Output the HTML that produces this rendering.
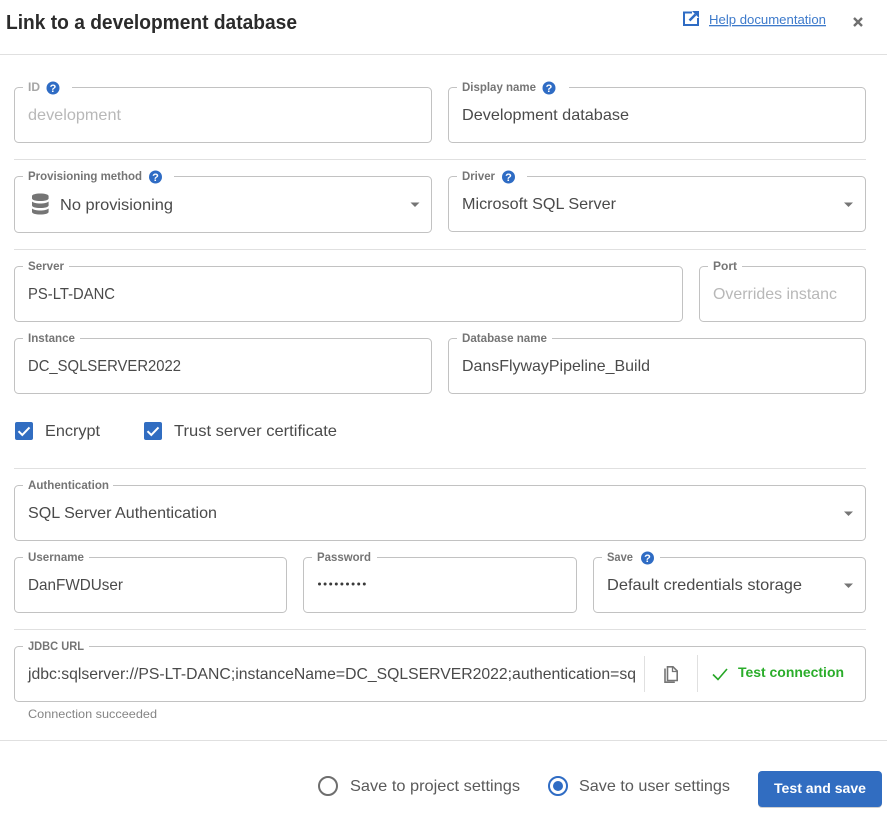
<!DOCTYPE html>
<html>
<head>
<meta charset="utf-8">
<style>
html,body{margin:0;padding:0;background:#fff;width:887px;height:813px;overflow:hidden}
svg{display:block}
text{font-family:"Liberation Sans",sans-serif}
.v{font-size:16px;fill:#4a4a4a}
.d{font-size:16px;fill:#b8b8b8}
.l{font-size:12px;fill:#757575;font-weight:bold}
.ld{font-size:12px;fill:#a6a6a6;font-weight:bold}
.b{fill:none;stroke:#c2c2c2;stroke-width:1}
.g{fill:#fff}
.h{fill:#e0e0e0}
.c{fill:#757575}
</style>
</head>
<body>
<svg width="887" height="813" viewBox="0 0 887 813" xmlns="http://www.w3.org/2000/svg">
<defs>
<g id="q"><circle cx="0" cy="0" r="6.500" fill="#2f6cc4"/><text x="0" y="4" text-anchor="middle" style="font-size:11px;font-weight:bold;fill:#fff">?</text></g>
<g id="cb"><rect width="18" height="18" rx="2" fill="#316dc1"/><path d="M3.500 9.200l3.800 3.800 7.200-7.600" fill="none" stroke="#fff" stroke-width="2"/></g>
</defs>

<!-- header -->
<text x="6" y="29" textLength="291" lengthAdjust="spacingAndGlyphs" style="font-size:20px;font-weight:bold;fill:#2b2b2b">Link to a development database</text>
<path d="M692 12.500h-8v12.500h14v-7" fill="none" stroke="#2f6cc4" stroke-width="2"/>
<path d="M689.500 20.500l6-6" fill="none" stroke="#2f6cc4" stroke-width="2.500"/>
<path d="M692 11h7v7z" fill="#2f6cc4"/>
<text x="709" y="24" textLength="117" lengthAdjust="spacingAndGlyphs" text-decoration="underline" style="font-size:13px;fill:#3d7acb">Help documentation</text>
<path d="M854 18l8 8M862 18l-8 8" stroke="#6f6f6f" stroke-width="2.400" fill="none"/>
<rect x="0" y="54" width="887" height="1" class="h"/>

<!-- row 1 -->
<rect x="14.500" y="87.500" width="417" height="55" rx="4" class="b"/>
<rect x="23" y="84" width="49" height="6" class="g"/>
<text x="28" y="91" class="ld" textLength="12" lengthAdjust="spacingAndGlyphs">ID</text>
<use href="#q" x="53" y="88"/>
<text x="28" y="120" class="d" textLength="93" lengthAdjust="spacingAndGlyphs">development</text>

<rect x="448.500" y="87.500" width="417" height="55" rx="4" class="b"/>
<rect x="457" y="84" width="112" height="6" class="g"/>
<text x="462" y="91" class="l" textLength="74" lengthAdjust="spacingAndGlyphs">Display name</text>
<use href="#q" x="549" y="88"/>
<text x="462" y="120" class="v" textLength="167" lengthAdjust="spacingAndGlyphs">Development database</text>

<rect x="14" y="159" width="852" height="1" class="h"/>

<!-- row 2 -->
<rect x="14.500" y="176.500" width="417" height="56" rx="4" class="b"/>
<rect x="23" y="173" width="151" height="6" class="g"/>
<text x="28" y="180" class="l" textLength="114" lengthAdjust="spacingAndGlyphs">Provisioning method</text>
<use href="#q" x="155.500" y="177"/>
<path d="M32 196c0-1.500 3.800-2.500 8.300-2.500s8.300 1 8.300 2.500v2.500c0 1.500-3.800 2.500-8.300 2.500s-8.300-1-8.300-2.500zM32 201.500c1.500 1.300 4.800 2 8.300 2s6.800-.7 8.300-2v4c0 1.500-3.800 2.500-8.300 2.500s-8.300-1-8.300-2.500zM32 208.500c1.500 1.300 4.800 2 8.300 2s6.800-.7 8.300-2v3.500c0 1.500-3.800 2.500-8.300 2.500s-8.300-1-8.300-2.500z" fill="#757575"/>
<text x="60" y="210" class="v" textLength="113" lengthAdjust="spacingAndGlyphs">No provisioning</text>
<path d="M410.500 202.500h9l-4.500 4.500z" class="c"/>

<rect x="448.500" y="176.500" width="417" height="55" rx="4" class="b"/>
<rect x="457" y="173" width="70" height="6" class="g"/>
<text x="462" y="180" class="l" textLength="33" lengthAdjust="spacingAndGlyphs">Driver</text>
<use href="#q" x="508.500" y="177"/>
<text x="462" y="209" class="v" textLength="154" lengthAdjust="spacingAndGlyphs">Microsoft SQL Server</text>
<path d="M844 202.500h9l-4.500 4.500z" class="c"/>

<rect x="14" y="249" width="852" height="1" class="h"/>

<!-- row 3 -->
<rect x="14.500" y="266.500" width="668" height="55" rx="4" class="b"/>
<rect x="23" y="263" width="46" height="6" class="g"/>
<text x="28" y="270" class="l" textLength="36" lengthAdjust="spacingAndGlyphs">Server</text>
<text x="28" y="299" class="v" textLength="87" lengthAdjust="spacingAndGlyphs">PS-LT-DANC</text>

<rect x="699.500" y="266.500" width="166" height="55" rx="4" class="b"/>
<rect x="708" y="263" width="34" height="6" class="g"/>
<text x="713" y="270" class="l" textLength="24" lengthAdjust="spacingAndGlyphs">Port</text>
<text x="713" y="299" class="d" textLength="124" lengthAdjust="spacingAndGlyphs">Overrides instanc</text>

<!-- row 4 -->
<rect x="14.500" y="338.500" width="417" height="55" rx="4" class="b"/>
<rect x="23" y="335" width="57" height="6" class="g"/>
<text x="28" y="342" class="l" textLength="47" lengthAdjust="spacingAndGlyphs">Instance</text>
<text x="28" y="371" class="v" textLength="153" lengthAdjust="spacingAndGlyphs">DC_SQLSERVER2022</text>

<rect x="448.500" y="338.500" width="417" height="55" rx="4" class="b"/>
<rect x="457" y="335" width="95" height="6" class="g"/>
<text x="462" y="342" class="l" textLength="85" lengthAdjust="spacingAndGlyphs">Database name</text>
<text x="462" y="371" class="v" textLength="188" lengthAdjust="spacingAndGlyphs">DansFlywayPipeline_Build</text>

<!-- checkboxes -->
<use href="#cb" x="15" y="422"/>
<text x="45" y="436" class="v" textLength="55" lengthAdjust="spacingAndGlyphs">Encrypt</text>
<use href="#cb" x="144" y="422"/>
<text x="174" y="436" class="v" textLength="163" lengthAdjust="spacingAndGlyphs">Trust server certificate</text>

<rect x="14" y="468" width="852" height="1" class="h"/>

<!-- auth -->
<rect x="14.500" y="485.500" width="851" height="55" rx="4" class="b"/>
<rect x="23" y="482" width="90" height="6" class="g"/>
<text x="28" y="489" class="l" textLength="81" lengthAdjust="spacingAndGlyphs">Authentication</text>
<text x="28" y="518" class="v" textLength="189" lengthAdjust="spacingAndGlyphs">SQL Server Authentication</text>
<path d="M844 511.500h9l-4.500 4.500z" class="c"/>

<!-- creds -->
<rect x="14.500" y="557.500" width="272" height="55" rx="4" class="b"/>
<rect x="23" y="554" width="66" height="6" class="g"/>
<text x="28" y="561" class="l" textLength="56" lengthAdjust="spacingAndGlyphs">Username</text>
<text x="28" y="590" class="v" textLength="95" lengthAdjust="spacingAndGlyphs">DanFWDUser</text>

<rect x="303.500" y="557.500" width="273" height="55" rx="4" class="b"/>
<rect x="312" y="554" width="65" height="6" class="g"/>
<text x="317" y="561" class="l" textLength="54" lengthAdjust="spacingAndGlyphs">Password</text>
<g fill="#3a3a3a"><circle cx="319.500" cy="584" r="1.500"/><circle cx="325.100" cy="584" r="1.500"/><circle cx="330.700" cy="584" r="1.500"/><circle cx="336.300" cy="584" r="1.500"/><circle cx="341.900" cy="584" r="1.500"/><circle cx="347.500" cy="584" r="1.500"/><circle cx="353.100" cy="584" r="1.500"/><circle cx="358.700" cy="584" r="1.500"/><circle cx="364.300" cy="584" r="1.500"/></g>

<rect x="593.500" y="557.500" width="272" height="55" rx="4" class="b"/>
<rect x="602" y="554" width="58" height="6" class="g"/>
<text x="607" y="561" class="l" textLength="26" lengthAdjust="spacingAndGlyphs">Save</text>
<use href="#q" x="647.500" y="558"/>
<text x="607" y="590" class="v" textLength="195" lengthAdjust="spacingAndGlyphs">Default credentials storage</text>
<path d="M844 583.500h9l-4.500 4.500z" class="c"/>

<rect x="14" y="629" width="852" height="1" class="h"/>

<!-- JDBC -->
<rect x="14.500" y="646.500" width="851" height="55" rx="4" class="b"/>
<rect x="23" y="643" width="66" height="6" class="g"/>
<text x="28" y="650" class="l" textLength="56" lengthAdjust="spacingAndGlyphs">JDBC URL</text>
<text x="28" y="679" class="v" textLength="608" lengthAdjust="spacingAndGlyphs">jdbc:sqlserver://PS-LT-DANC;instanceName=DC_SQLSERVER2022;authentication=sq</text>
<rect x="644" y="656" width="1" height="36" class="h"/>
<rect x="697" y="655" width="1" height="37" class="h"/>
<path d="M667.500 666.800h5.500l4.200 4.200v9.500h-9.700z" fill="none" stroke="#757575" stroke-width="1.600"/>
<path d="M665 668.500v13.700h9.800" fill="none" stroke="#757575" stroke-width="1.600"/>
<path d="M672.500 667v4.500h4.500" fill="none" stroke="#757575" stroke-width="1.300"/>
<path d="M713 674.500l5 5 9-10.500" fill="none" stroke="#26a626" stroke-width="1.600"/>
<text x="738" y="677" textLength="106" lengthAdjust="spacingAndGlyphs" style="font-size:14px;font-weight:bold;fill:#2bad2b">Test connection</text>
<text x="28" y="718" textLength="129" lengthAdjust="spacingAndGlyphs" style="font-size:12px;fill:#858585">Connection succeeded</text>

<rect x="0" y="740" width="887" height="1" class="h"/>

<!-- footer -->
<circle cx="328" cy="786" r="9" fill="none" stroke="#6e6e6e" stroke-width="2"/>
<text x="350" y="791" class="v" textLength="170" lengthAdjust="spacingAndGlyphs" style="fill:#5a5a5a">Save to project settings</text>
<circle cx="558" cy="786" r="9" fill="none" stroke="#2f6cc4" stroke-width="2"/>
<circle cx="558" cy="786" r="5" fill="#2f6cc4"/>
<text x="579" y="791" class="v" textLength="151" lengthAdjust="spacingAndGlyphs" style="fill:#5a5a5a">Save to user settings</text>
<rect x="758" y="772" width="124" height="36" rx="4" fill="#d0d0d0"/>
<rect x="758" y="771" width="124" height="36" rx="4" fill="#316dc1"/>
<text x="774" y="793" textLength="92" lengthAdjust="spacingAndGlyphs" style="font-size:14px;font-weight:bold;fill:#fff">Test and save</text>
</svg>
</body>
</html>
